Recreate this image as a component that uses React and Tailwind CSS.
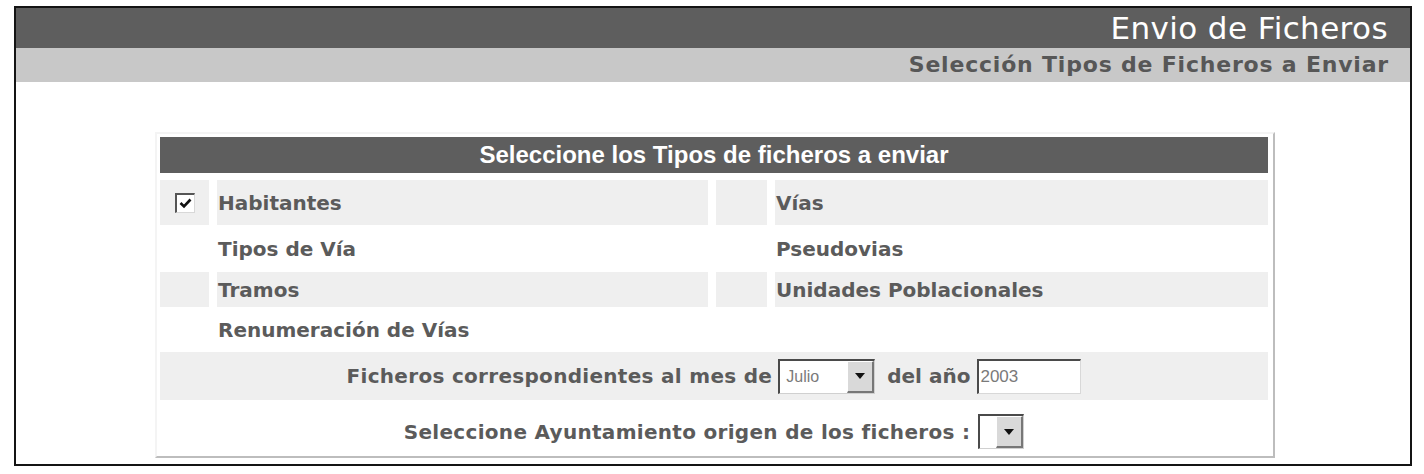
import React from "react"

function Check() {
  return (
    <span className="flex h-[20px] w-[20px] items-center justify-center border-t-2 border-l-2 border-r border-b border-t-[#555] border-l-[#555] border-r-[#d8d8d8] border-b-[#d8d8d8] bg-white">
      <svg width="13" height="11" viewBox="0 0 13 11">
        <polyline points="1.5,5 5,8.5 11.5,1.5" fill="none" stroke="#111" strokeWidth="2.6" />
      </svg>
    </span>
  )
}

function DropBtn() {
  return (
    <span className="flex h-full w-[27px] items-center justify-center border-t border-l border-r-2 border-b-2 border-t-white border-l-white border-r-[#777] border-b-[#777] bg-[#d9d9d9]">
      <svg width="10" height="6" viewBox="0 0 10 6">
        <polygon points="0,0 10,0 5,6" fill="#111" />
      </svg>
    </span>
  )
}

export default function App() {
  const label = "flex items-center bg-[#efefef] pl-[1px] text-[20px] font-bold text-[#5b5b5b]"
  const labelW = "flex items-center pl-[1px] text-[20px] font-bold text-[#5b5b5b]"

  return (
    <div className="min-h-screen bg-white pt-[6px] pl-[14px] font-['DejaVu_Sans',sans-serif]">
      <div className="h-[460px] w-[1398px] border-[2px] border-[#141414] bg-white">
        <div className="flex h-[40px] items-center justify-end bg-[#5e5e5e] pr-[22px]">
          <span className="text-[31px] leading-none tracking-[0.4px] text-white">Envio de Ficheros</span>
        </div>
        <div className="flex h-[34px] items-center justify-end bg-[#c8c8c8] pr-[21px]">
          <span className="text-[22px] font-bold leading-none tracking-[0.8px] text-[#575757]">Selección Tipos de Ficheros a Enviar</span>
        </div>

        <div className="mt-[50px] ml-[139px] w-[1120px] border-t-2 border-l-2 border-r-2 border-b-2 border-t-[#f4f4f4] border-l-[#f4f4f4] border-r-[#bdbdbd] border-b-[#bdbdbd] pt-[3px] pl-[3px] pr-[5px]">
          <div className="flex h-[36px] items-center justify-center bg-[#5e5e5e] font-['Liberation_Sans',sans-serif] text-[24px] font-bold text-white">
            Seleccione los Tipos de ficheros a enviar
          </div>

          <div className="mt-[7px] grid grid-cols-[49px_491px_51px_1fr] gap-x-[8px] gap-y-[7px]">
            <div className="flex h-[45px] items-center justify-center bg-[#efefef]"><Check /></div>
            <div className={label}>Habitantes</div>
            <div className="bg-[#efefef]"></div>
            <div className={label}>Vías</div>

            <div className="h-[33px]"></div>
            <div className={labelW}>Tipos de Vía</div>
            <div></div>
            <div className={labelW}>Pseudovias</div>

            <div className="h-[35px] bg-[#efefef]"></div>
            <div className={label}>Tramos</div>
            <div className="bg-[#efefef]"></div>
            <div className={label}>Unidades Poblacionales</div>

            <div className="h-[31px]"></div>
            <div className={labelW}>Renumeración de Vías</div>
            <div></div>
            <div></div>

            <div className="col-span-4 flex h-[48px] items-center justify-center bg-[#efefef] text-[20px] font-bold text-[#5b5b5b]">
              <span className="tracking-[0.3px]">Ficheros correspondientes al mes de</span>
              <span className="ml-[6px] flex h-[35px] w-[97px] items-stretch border-t-2 border-l-2 border-r border-b border-t-[#4a4a4a] border-l-[#4a4a4a] border-r-[#d0d0d0] border-b-[#d0d0d0] bg-white">
                <span className="flex flex-1 items-center pl-[6px] font-['Liberation_Sans',sans-serif] text-[16px] font-normal text-[#7a7a7a]">Julio</span>
                <DropBtn />
              </span>
              <span className="ml-[12px]">del año</span>
              <span className="ml-[7px] flex h-[35px] w-[104px] items-center border-t-2 border-l-2 border-r border-b border-t-[#4a4a4a] border-l-[#4a4a4a] border-r-[#d8d8d8] border-b-[#d8d8d8] bg-white pl-[1px] font-['Liberation_Sans',sans-serif] text-[17px] font-normal text-[#7a7a7a]">
                2003
              </span>
            </div>

            <div className="col-span-4 flex h-[49px] items-center justify-center text-[20px] font-bold text-[#5b5b5b]">
              <span className="tracking-[0.3px]">Seleccione Ayuntamiento origen de los ficheros :</span>
              <span className="ml-[8px] flex h-[35px] w-[46px] items-stretch justify-end border-t-2 border-l-2 border-r border-b border-t-[#4a4a4a] border-l-[#4a4a4a] border-r-[#d0d0d0] border-b-[#d0d0d0] bg-white">
                <DropBtn />
              </span>
            </div>
          </div>
        </div>
      </div>
    </div>
  )
}
